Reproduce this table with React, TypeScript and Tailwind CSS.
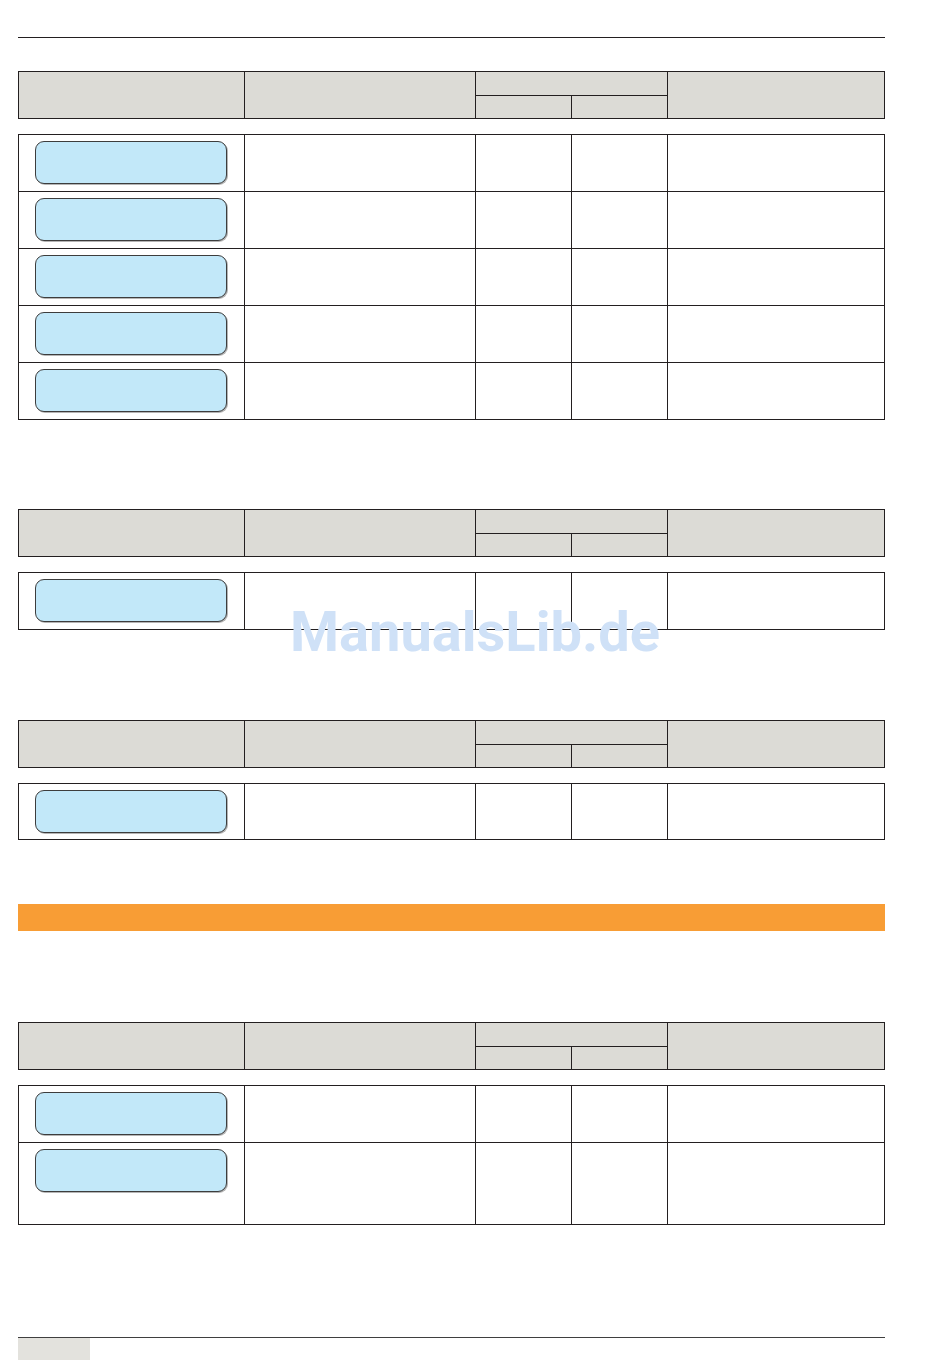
const cols = "grid grid-cols-[226px_231px_96px_96px_217px]";

function Lcd() {
  return (
    <div className="ml-[16px] mt-[6px] h-[43px] w-[192px] rounded-[9px] border border-[#3d3d3d] bg-[#c2e8f9] shadow-[1px_1px_0_#b5b5b5]" />
  );
}

function Header({ className = "" }: { className?: string }) {
  return (
    <div
      className={`${cols} grid-rows-[24px_23px] w-[867px] border-l border-t border-[#231f20] bg-[#dcdbd6] ${className}`}
    >
      <div className="row-span-2 border-b border-r border-[#231f20]" />
      <div className="row-span-2 border-b border-r border-[#231f20]" />
      <div className="col-span-2 border-b border-r border-[#231f20]" />
      <div className="row-span-2 border-b border-r border-[#231f20]" />
      <div className="border-b border-r border-[#231f20]" />
      <div className="border-b border-r border-[#231f20]" />
    </div>
  );
}

function Body({ rows }: { rows: number[] }) {
  return (
    <div className={`${cols} mt-[15px] w-[867px] border-l border-t border-[#231f20]`}>
      {rows.map((h, i) => (
        <div key={i} className="contents">
          <div
            className="border-b border-r border-[#231f20]"
            style={{ height: h }}
          >
            <Lcd />
          </div>
          <div className="border-b border-r border-[#231f20]" />
          <div className="border-b border-r border-[#231f20]" />
          <div className="border-b border-r border-[#231f20]" />
          <div className="border-b border-r border-[#231f20]" />
        </div>
      ))}
    </div>
  );
}

export default function App() {
  return (
    <div className="relative h-[1369px] w-[950px] overflow-hidden bg-white pl-[18px] pt-[37px] font-['Roboto',sans-serif]">
      <div className="h-px w-[867px] bg-[#231f20]" />

      <Header className="mt-[33px]" />
      <Body rows={[57, 57, 57, 57, 57]} />

      <Header className="mt-[89px]" />
      <Body rows={[57]} />

      <Header className="mt-[90px]" />
      <Body rows={[56]} />

      <div className="mt-[64px] h-[27px] w-[867px] bg-[#f89d35]" />

      <Header className="mt-[91px]" />
      <Body rows={[57, 82]} />

      <div className="mt-[112px] h-px w-[867px] bg-[#3f3f3f]" />
      <div className="h-[22px] w-[72px] bg-[#e3e2dd]" />

      <div className="pointer-events-none absolute left-0 right-0 top-[604px] text-center text-[56px] font-bold leading-[56px] text-[#cfe1f7]">
        ManualsLib.de
      </div>
    </div>
  );
}
